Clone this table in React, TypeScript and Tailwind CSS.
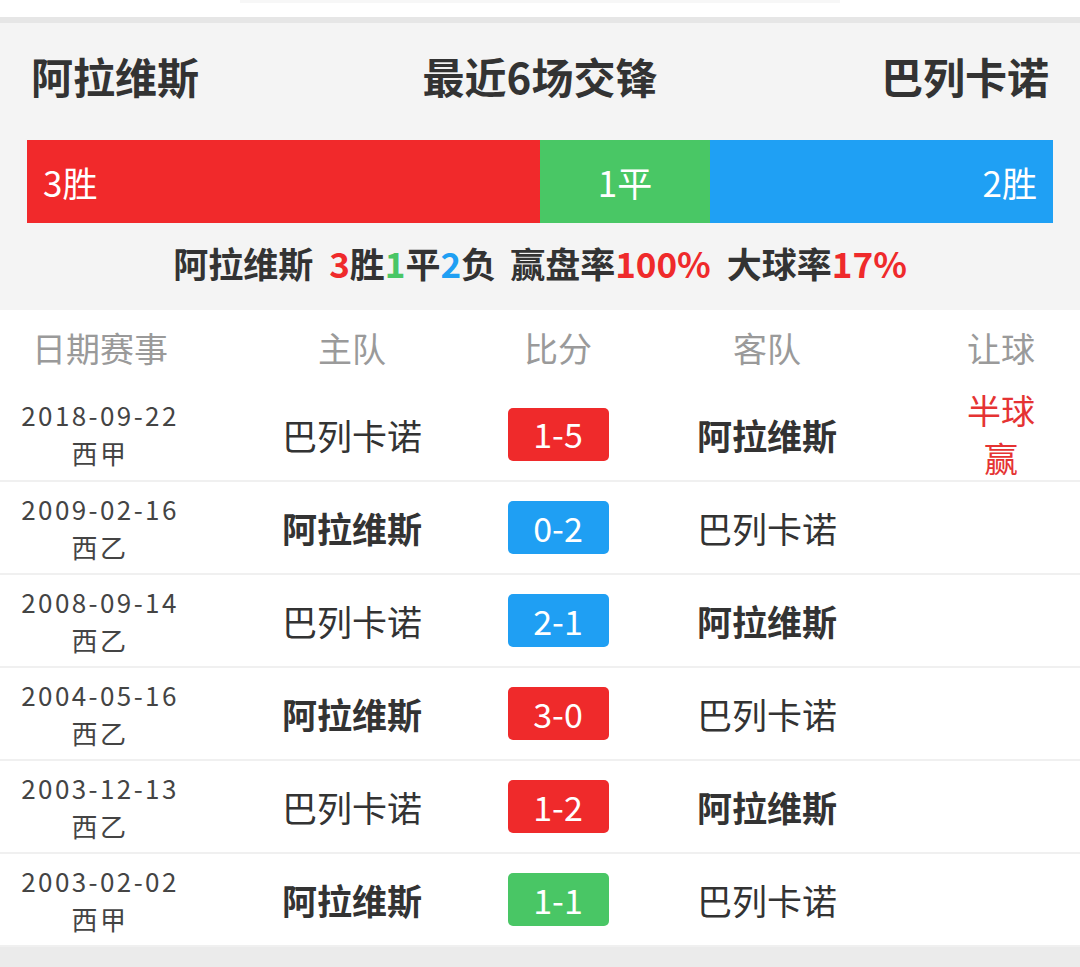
const matches = [
  { date: "2018-09-22", league: "西甲", home: "巴列卡诺", away: "阿拉维斯", score: "1-5", color: "bg-[#ef2a2b]", homeBold: false, handicap: true },
  { date: "2009-02-16", league: "西乙", home: "阿拉维斯", away: "巴列卡诺", score: "0-2", color: "bg-[#1f9ff3]", homeBold: true, handicap: false },
  { date: "2008-09-14", league: "西乙", home: "巴列卡诺", away: "阿拉维斯", score: "2-1", color: "bg-[#1f9ff3]", homeBold: false, handicap: false },
  { date: "2004-05-16", league: "西乙", home: "阿拉维斯", away: "巴列卡诺", score: "3-0", color: "bg-[#ef2a2b]", homeBold: true, handicap: false },
  { date: "2003-12-13", league: "西乙", home: "巴列卡诺", away: "阿拉维斯", score: "1-2", color: "bg-[#ef2a2b]", homeBold: false, handicap: false },
  { date: "2003-02-02", league: "西甲", home: "阿拉维斯", away: "巴列卡诺", score: "1-1", color: "bg-[#49c665]", homeBold: true, handicap: false },
];

export default function App() {
  return (
    <div className="w-[1080px] h-[967px] overflow-hidden bg-white font-['Noto_Sans_CJK_SC',sans-serif] text-[#333]">
      {/* Top strip */}
      <div className="h-[17px] bg-white">
        <div className="mx-[240px] h-[3px] bg-[#f7f7f7]" />
      </div>
      <div className="h-[6px] bg-[#e6e6e6]" />

      {/* Summary */}
      <section className="bg-[#f4f4f4]">
        <div className="flex h-[110px] items-center justify-between px-[31px] pb-[4px] text-[42px] font-bold leading-none text-[#333]">
          <span>阿拉维斯</span>
          <span>最近6场交锋</span>
          <span>巴列卡诺</span>
        </div>
        <div className="mx-[27px] mt-[7px] flex h-[83px] text-[35px] leading-none text-white">
          <div className="flex w-[513px] items-center bg-[#f1292b] pl-[16px]">3胜</div>
          <div className="flex w-[170px] items-center justify-center bg-[#49c765]">1平</div>
          <div className="flex flex-1 items-center justify-end bg-[#1fa0f4] pr-[16px]">2胜</div>
        </div>
        <div className="flex h-[87px] items-center justify-center pb-[8px] text-[35px] font-bold leading-none text-[#333]">
          <span>阿拉维斯</span>
          <span className="ml-[16px] text-[#ef2a2b]">3</span>
          <span>胜</span>
          <span className="text-[#49c665]">1</span>
          <span>平</span>
          <span className="text-[#1f9ff3]">2</span>
          <span>负</span>
          <span className="ml-[14px]">赢盘率</span>
          <span className="text-[#ef2a2b]">100%</span>
          <span className="ml-[16px]">大球率</span>
          <span className="text-[#ef2a2b]">17%</span>
        </div>
      </section>

      {/* Table */}
      <div className="grid h-[76px] grid-cols-[200px_304px_108px_310px_158px] items-center text-center text-[34px] leading-none text-[#9a9a9a]">
        <span>日期赛事</span>
        <span>主队</span>
        <span>比分</span>
        <span>客队</span>
        <span>让球</span>
      </div>

      {matches.map((m, i) => (
        <div
          key={m.date}
          className={`grid grid-cols-[200px_304px_108px_310px_158px] items-center border-b-2 border-[#f0f0f0] text-center ${i === 0 ? "h-[96px]" : "h-[93px]"}`}
        >
          <div className="text-[26px] leading-[38px] tracking-[2.4px] text-[#444]">
            {m.date}
            <br />
            {m.league}
          </div>
          <span className={`text-[35px] leading-none ${m.homeBold ? "font-bold" : "font-normal"}`}>{m.home}</span>
          <div className="flex justify-center">
            <span className={`flex h-[53px] w-[101px] items-center justify-center rounded-[5px] text-[34px] leading-none text-white ${m.color}`}>
              {m.score}
            </span>
          </div>
          <span className={`text-[35px] leading-none ${m.homeBold ? "font-normal" : "font-bold"}`}>{m.away}</span>
          <div className="text-[34px] leading-[48px] text-[#e53333]">
            {m.handicap && (
              <>
                半球
                <br />
                赢
              </>
            )}
          </div>
        </div>
      ))}

      <div className="h-[20px] bg-[#ebebeb]" />
    </div>
  );
}
